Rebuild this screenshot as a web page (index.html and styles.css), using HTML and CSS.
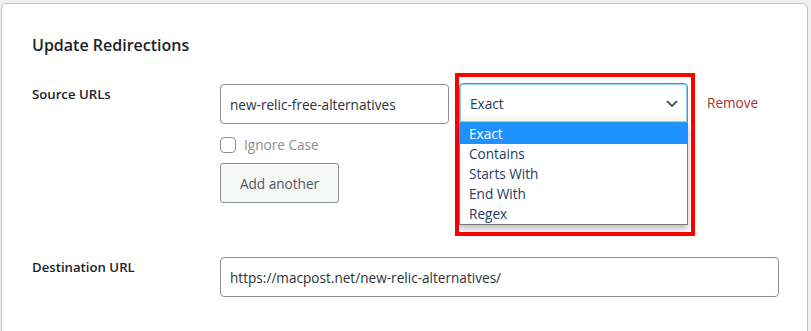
FILE: index.html
```html
<!DOCTYPE html>
<html lang="en">
<head>
    <meta charset="UTF-8">
    <meta name="viewport" content="width=device-width, initial-scale=1.0">
    <title>Update Redirections</title>
    <link rel="stylesheet" href="styles.css">
</head>
<body>
    <div class="card">
        <h2 class="card-title">Update Redirections</h2>

        <div class="field-row">
            <div class="field-label">Source URLs</div>
            <div class="source-row">
                <div class="source-col">
                    <input type="text" class="text-input" value="new-relic-free-alternatives">
                    <label class="check-row">
                        <span class="checkbox"></span>
                        <span class="check-label">Ignore Case</span>
                    </label>
                    <button class="btn-secondary">Add another</button>
                </div>

                <div class="match-frame">
                    <div class="select-box">
                        <span>Exact</span>
                        <svg class="chevron" width="12" height="7" viewBox="0 0 12 7">
                            <path d="M1 1l5 5 5-5" fill="none" stroke="#50575e" stroke-width="1.8"/>
                        </svg>
                    </div>
                    <ul class="select-list">
                        <li class="active">Exact</li>
                        <li>Contains</li>
                        <li>Starts With</li>
                        <li>End With</li>
                        <li>Regex</li>
                    </ul>
                </div>

                <a href="#" class="remove-link">Remove</a>
            </div>
        </div>

        <div class="field-row dest-row">
            <div class="field-label">Destination URL</div>
            <input type="text" class="text-input dest-input" value="https://macpost.net/new-relic-alternatives/">
        </div>
    </div>
</body>
</html>
```

FILE: styles.css
```css
:root {
    --text-color: #1d2327;
    --field-border: #8c8f94;
    --focus-color: #2a9fdc;
    --danger-color: #b32d2e;
}

* {
    margin: 0;
    padding: 0;
    box-sizing: border-box;
}

body {
    font-family: "Open Sans", "Noto Sans", Arial, sans-serif;
    font-size: 13.6px;
    background: #f0f0f1;
    color: var(--text-color);
    overflow: hidden;
}

.card {
    background: white;
    border: 1px solid #c3c4c7;
    border-radius: 6px;
    margin: 3px 3px 0 1px;
    padding: 30px 30px 40px 30px;
    min-height: 340px;
}

.card-title {
    font-size: 16px;
    font-weight: 600;
    line-height: 22px;
    margin-bottom: 28px;
}

.field-row {
    display: grid;
    grid-template-columns: 188px 1fr;
    align-items: start;
}

.field-label {
    font-weight: 600;
    font-size: 13.2px;
    line-height: 20px;
}

.dest-row {
    margin-top: 21px;
}

.source-row {
    display: flex;
    align-items: flex-start;
}

.source-col {
    width: 229px;
    display: flex;
    flex-direction: column;
    align-items: flex-start;
}

.text-input {
    width: 100%;
    height: 40px;
    padding: 0 9px;
    border: 1px solid var(--field-border);
    border-radius: 4px;
    font-family: inherit;
    font-size: 13.6px;
    color: #2c3338;
    background: white;
}

.dest-input {
    width: 559px;
}

.check-row {
    display: flex;
    align-items: center;
    gap: 8px;
    margin-top: 13px;
    height: 16px;
}

.checkbox {
    width: 16px;
    height: 16px;
    border: 1px solid var(--field-border);
    border-radius: 4px;
}

.check-label {
    color: #8c8f94;
    line-height: 16px;
}

.btn-secondary {
    margin-top: 10px;
    width: 119px;
    height: 40px;
    background: #f6f7f7;
    border: 1px solid var(--field-border);
    border-radius: 3px;
    color: #50575e;
    font-family: inherit;
    font-size: 13.6px;
}

.match-frame {
    margin-top: -11px;
    margin-left: 6px;
    border: 4px solid #ff0000;
    padding: 6px 3px 7px 0;
}

.select-box {
    width: 229px;
    height: 40px;
    display: flex;
    align-items: center;
    justify-content: space-between;
    padding: 0 9px 0 10px;
    border: 1px solid var(--focus-color);
    border-radius: 4px 4px 0 0;
    box-shadow: inset 0 0 0 1px #8fd0f0, inset 0 -8px 10px -8px rgba(0, 0, 0, 0.12);
    color: #243b63;
}

.select-list {
    list-style: none;
    width: 229px;
    border: 1px solid #7a7a7a;
    box-shadow: 0 4px 6px rgba(0, 0, 0, 0.25);
    color: #243b63;
}

.select-list li {
    height: 20px;
    line-height: 20px;
    padding-left: 9px;
}

.select-list li.active {
    background: #1e90ff;
    color: white;
}

.remove-link {
    margin-left: 12px;
    margin-top: 9px;
    color: var(--danger-color);
    text-decoration: none;
    line-height: 20px;
}
```
